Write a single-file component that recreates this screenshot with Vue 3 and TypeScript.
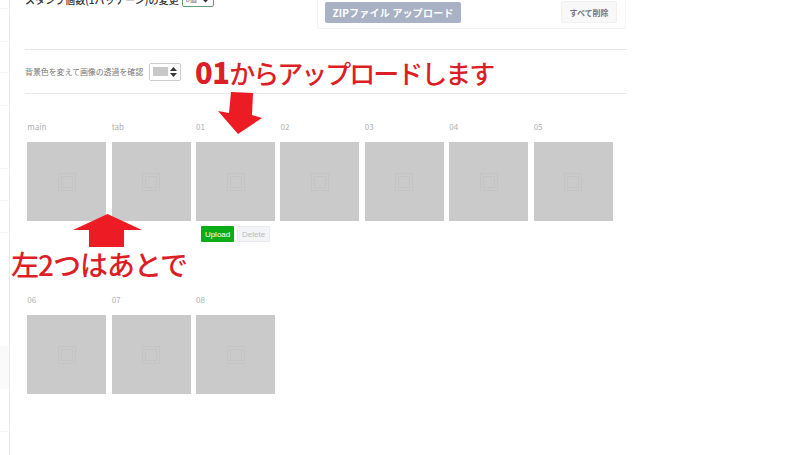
<script setup lang="ts">
const rows: string[][] = [
  ['main', 'tab', '01', '02', '03', '04', '05'],
  ['06', '07', '08'],
]
const sideLines: number[] = [8, 41, 72, 105, 168, 200, 232, 431]
</script>

<template>
  <div class="page">
    <aside class="side">
      <i v-for="y in sideLines" :key="y" class="side-line" :style="{ top: y + 'px' }"></i>
      <i class="side-block"></i>
    </aside>
    <main class="content">
      <header class="top">
        <div class="count">
          <span>スタンプ個数(1パッケージ)の変更</span>
          <span class="count-select">8個<svg width="9" height="6" viewBox="0 0 9 6"><path d="M1 1l3.500 3.500L8 1" fill="none" stroke="#333" stroke-width="1.400"/></svg></span>
        </div>
        <div class="zip">
          <button class="zip-btn">ZIPファイル アップロード</button>
          <button class="clear-btn">すべて削除</button>
        </div>
      </header>
      <div class="bg-row">
        <span>背景色を変えて画像の透過を確認</span>
        <span class="bg-select">
          <i class="swatch"></i>
          <svg width="7" height="10" viewBox="0 0 7 10"><path d="M3.500 0L7 4H0zM3.500 10L0 6h7z" fill="#333"/></svg>
        </span>
      </div>
      <section v-for="(row, r) in rows" :key="r" class="row" :class="{ second: r === 1 }">
        <div v-for="name in row" :key="name" class="cell">
          <div class="label">{{ name }}</div>
          <div class="tile">
            <svg width="18" height="18" viewBox="0 0 18 18" fill="none" stroke="#c4c4c4">
              <rect x=".5" y=".5" width="17" height="17"/>
              <rect x="3.500" y="3.500" width="11" height="11"/>
            </svg>
          </div>
          <div v-if="name === '01'" class="actions">
            <button class="upload">Upload</button>
            <button class="delete">Delete</button>
          </div>
        </div>
      </section>
    </main>

    <div class="note note-top"><b>01</b>からアップロードします</div>
    <svg class="arrow arrow-down" width="44" height="43" viewBox="0 0 44 43">
      <path d="M13 0L35 1L34 23L44 26L20 42L0 19L11 21Z" fill="#ed1c24"/>
    </svg>
    <svg class="arrow arrow-up" width="70" height="34" viewBox="0 0 70 34">
      <path d="M34.500 0L69 16H51V33H16V16H0Z" fill="#ed1c24"/>
    </svg>
    <div class="note note-left">左2つはあとで</div>
  </div>
</template>

<style scoped>
.page {
  position: relative;
  display: flex;
  width: 800px;
  height: 455px;
  overflow: hidden;
  background: #fff;
  font-family: "Noto Sans CJK JP", "Noto Sans", sans-serif;
}
.side {
  position: relative;
  flex: none;
  width: 9px;
  border-right: 1px solid #e9e9e9;
}
.side-line {
  position: absolute;
  left: 0;
  width: 9px;
  height: 1px;
  background: #f5f5f5;
}
.side-block {
  position: absolute;
  left: 0;
  top: 346px;
  width: 9px;
  height: 43px;
  background: #fafafa;
}
.content {
  width: 602px;
  margin-left: 15px;
}
.top {
  display: flex;
  justify-content: space-between;
  height: 57px;
  margin-top: -8px;
  border-bottom: 1px solid #e9e9e9;
  box-sizing: content-box;
}
.count {
  display: flex;
  align-items: flex-start;
  gap: 3px;
  color: #333;
  font-size: 10.100px;
  font-weight: 500;
  line-height: 15px;
}
.count-select {
  display: flex;
  align-items: center;
  justify-content: space-between;
  box-sizing: border-box;
  width: 32px;
  height: 15px;
  padding: 0 3px;
  border: 1px solid #5f9e78;
  border-radius: 2px;
  font-size: 7px;
  font-weight: 400;
  color: #666;
}
.zip {
  display: flex;
  justify-content: space-between;
  box-sizing: border-box;
  width: 309px;
  height: 37px;
  margin-right: 1px;
  padding: 10px 8px 0 7px;
  border: 1px solid #f3f3f3;
  border-top: 0;
  border-radius: 0 0 3px 3px;
}
.zip button {
  font-family: inherit;
  font-weight: 700;
  border-radius: 2px;
  padding: 0;
}
.zip-btn {
  width: 136px;
  height: 21px;
  border: 0;
  background: #a9b1c4;
  color: #fff;
  font-size: 10px;
  letter-spacing: 0.2px;
}
.clear-btn {
  width: 56px;
  height: 22px;
  margin-top: -1px;
  border: 1px solid #f0f0f0;
  background: #f8f8f8;
  color: #777;
  font-size: 8px;
}
.bg-row {
  display: flex;
  align-items: center;
  gap: 6px;
  height: 43px;
  border-bottom: 1px solid #e9e9e9;
  color: #777;
  font-size: 8px;
  letter-spacing: -0.1px;
}
.bg-select {
  display: flex;
  align-items: center;
  justify-content: space-between;
  box-sizing: border-box;
  width: 32px;
  height: 18px;
  padding: 0 3px;
  border: 1px solid #ccc;
  border-radius: 2px;
}
.swatch {
  width: 15px;
  height: 9px;
  background: #c8c8c8;
}
.row {
  display: flex;
  gap: 5.400px;
  padding: 27px 0 0 2.300px;
}
.row.second {
  padding-top: 52px;
}
.cell {
  width: 79px;
}
.label {
  height: 21px;
  color: #b0b0b0;
  font-size: 8px;
  line-height: 12px;
}
.tile {
  display: flex;
  align-items: center;
  justify-content: center;
  width: 79px;
  height: 79px;
  background: #cacaca;
}
.actions {
  display: flex;
  gap: 3px;
  margin: 5px 0 0 5px;
}
.actions button {
  height: 16px;
  padding: 0;
  border-radius: 1px;
  font-family: "Liberation Sans", sans-serif;
  font-size: 8px;
  font-weight: 400;
}
.upload {
  width: 33px;
  border: 0;
  background: #0aad17;
  color: #fff;
}
.delete {
  width: 33px;
  border: 1px solid #e8eaee;
  background: #f3f4f7;
  color: #bbb;
}
.note {
  position: absolute;
  color: #dc1f26;
  white-space: nowrap;
  font-weight: 500;
}
.note b {
  font-size: 29px;
  font-weight: 800;
  letter-spacing: -0.500px;
}
.note-top {
  left: 195px;
  top: 49px;
  font-size: 26px;
  line-height: 44px;
  letter-spacing: -2px;
}
.note-left {
  left: 11px;
  top: 243px;
  font-size: 28px;
  line-height: 42px;
  letter-spacing: -1px;
}
.arrow {
  position: absolute;
}
.arrow-down {
  left: 218px;
  top: 92px;
}
.arrow-up {
  left: 73px;
  top: 214px;
}
</style>
